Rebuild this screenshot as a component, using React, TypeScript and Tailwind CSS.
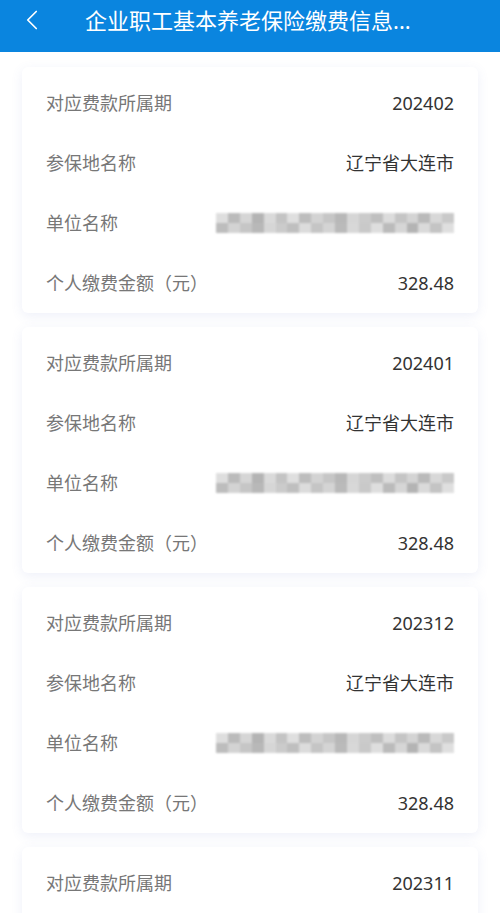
import { ChevronLeft } from "lucide-react";

const records = [
  { period: "202402", place: "辽宁省大连市", amount: "328.48" },
  { period: "202401", place: "辽宁省大连市", amount: "328.48" },
  { period: "202312", place: "辽宁省大连市", amount: "328.48" },
  { period: "202311", place: "辽宁省大连市", amount: "328.48" },
];

// mosaic shades for the blurred company name
const mosaic = [
  "#d9d9d9", "#b0b0b0", "#cfcfcf", "#a8a8a8", "#d4d4d4", "#bababa", "#dadada",
  "#b2b2b2", "#cccccc", "#bdbdbd", "#acacac", "#d0d0d0", "#c2c2c2", "#b5b5b5",
  "#d6d6d6", "#bcbcbc", "#cdcdcd", "#aeaeae", "#d2d2d2", "#c0c0c0",
];

function Blurred() {
  return (
    <div className="flex h-[20px] w-[238px] items-stretch opacity-85 blur-[1px]">
      {mosaic.map((c, i) => (
        <div key={i} className="flex flex-1 flex-col">
          <div className="flex-1" style={{ backgroundColor: c }} />
          <div className="flex-1" style={{ backgroundColor: mosaic[(i + 7) % mosaic.length] }} />
        </div>
      ))}
    </div>
  );
}

function Row({ label, children }: { label: string; children: React.ReactNode }) {
  return (
    <div className="flex h-[60px] items-center justify-between">
      <span className="text-[18px] text-[#777777]">{label}</span>
      <span className="text-[18px] text-[#333333]">{children}</span>
    </div>
  );
}

export default function App() {
  return (
    <div
      className="h-[913px] overflow-hidden bg-white"
      style={{ fontFamily: '"Noto Sans", "Noto Sans CJK SC", sans-serif' }}
    >
      <div className="flex h-[52px] items-center bg-[#0a85df] pb-[12px] text-white">
        <ChevronLeft className="ml-[15px] h-[34px] w-[34px]" strokeWidth={1.2} />
        <span className="ml-[36px] text-[22px] leading-none">企业职工基本养老保险缴费信息...</span>
      </div>
      <div className="flex flex-col gap-[14px] px-[22px] pt-[15px]">
        {records.map((r) => (
          <div
            key={r.period}
            className="rounded-[6px] bg-white px-[24px] pt-[6px] shadow-[0_3px_12px_rgba(90,110,200,0.10)]"
          >
            <Row label="对应费款所属期">{r.period}</Row>
            <Row label="参保地名称">{r.place}</Row>
            <Row label="单位名称">
              <Blurred />
            </Row>
            <Row label="个人缴费金额（元）">{r.amount}</Row>
          </div>
        ))}
      </div>
    </div>
  );
}
